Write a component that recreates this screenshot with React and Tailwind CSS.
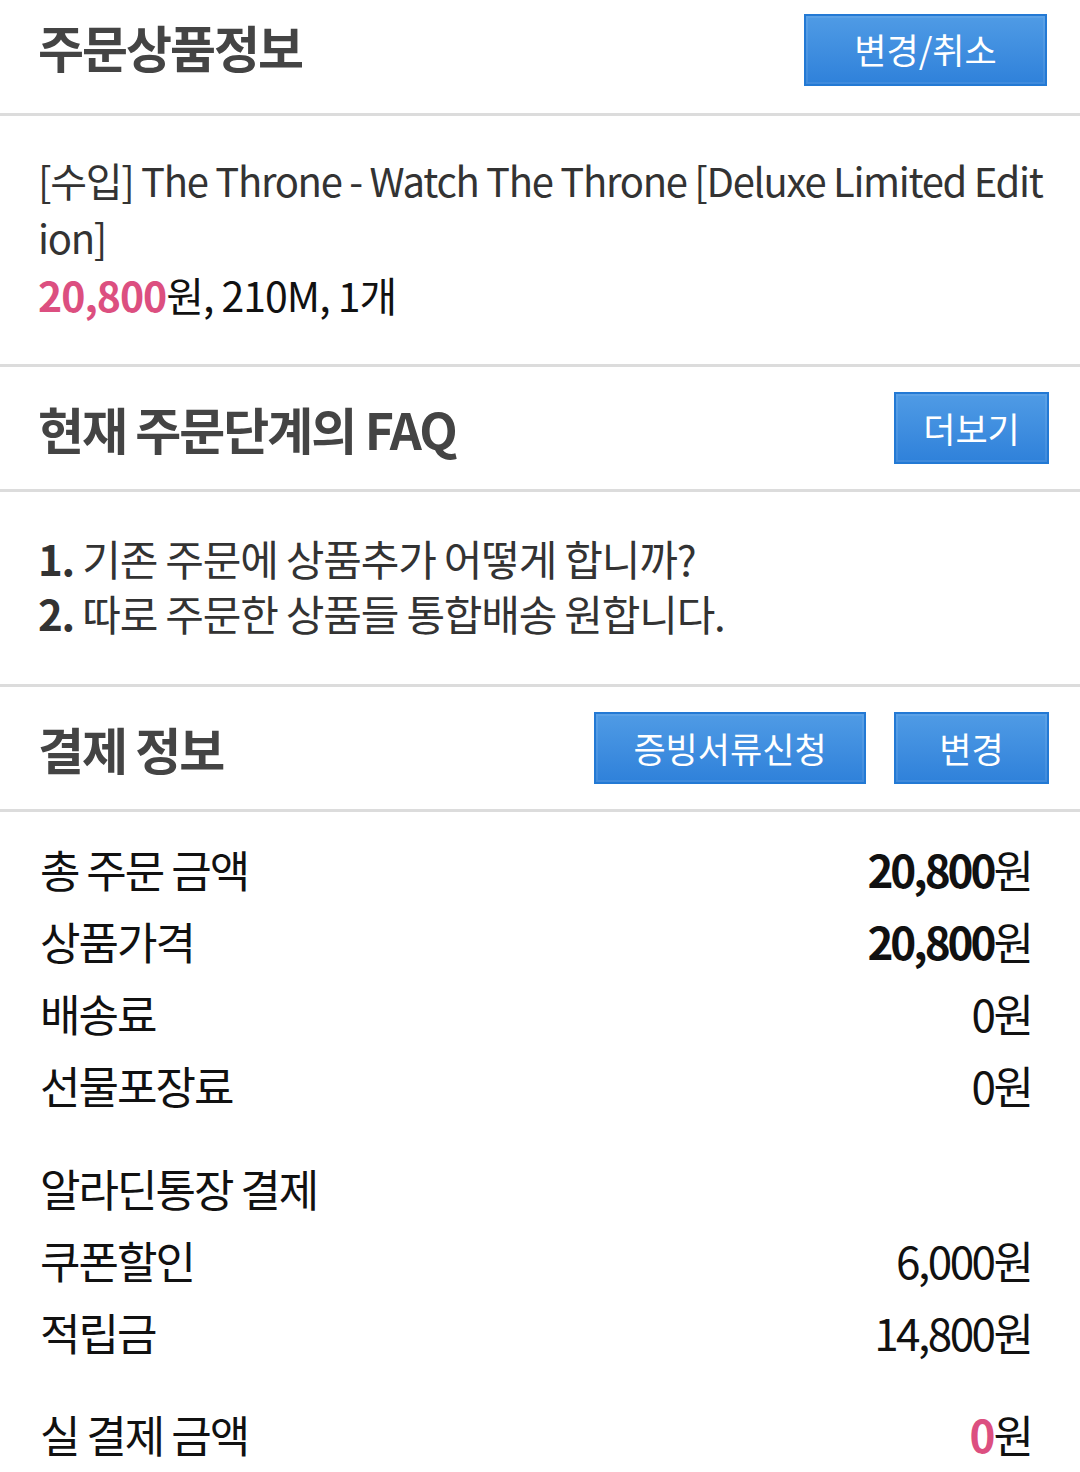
const font = { fontFamily: '"Noto Sans CJK KR", "Noto Sans", sans-serif' };

function BlueButton({ children, className = '' }) {
  return (
    <button
      className={
        'flex h-[72px] items-center justify-center border-2 border-[#2379d4] bg-gradient-to-b from-[#4f9be5] to-[#2f81da] text-[35px] text-white shadow-[inset_0_0_0_2px_rgba(255,255,255,0.08)] ' +
        className
      }
    >
      {children}
    </button>
  );
}

function Divider() {
  return <div className="h-[3px] bg-[#dcdcdc]" />;
}

function Row({ label, value, strong, pink }) {
  return (
    <div className="flex h-[72px] items-center justify-between text-[44px] tracking-[-2px] text-[#111]">
      <span>{label}</span>
      {value !== undefined && (
        <span>
          <span className={pink ? 'font-bold text-[#dc4f80]' : strong ? 'font-bold tracking-[-3px]' : 'tracking-[-2.5px]'}>{value}</span>원
        </span>
      )}
    </div>
  );
}

export default function App() {
  return (
    <div className="w-[1080px] bg-white" style={font}>
      <div className="flex h-[113px] items-center justify-between pb-[20px] pl-[38px] pr-[33px]">
        <h2 className="text-[50px] font-bold tracking-[-2px] text-[#444]">주문상품정보</h2>
        <div className="pt-[6px]">
          <BlueButton className="w-[243px]">변경/취소</BlueButton>
        </div>
      </div>
      <Divider />

      <div className="pb-[41px] pl-[38px] pr-[20px] pt-[36px] text-[40px] leading-[57px] tracking-[-1.3px] text-[#333]">
        <p>
          [수입] The Throne - Watch The Throne [Deluxe Limited Edit
          <br />
          ion]
        </p>
        <p className="text-[41px] tracking-[-1px] text-[#111]">
          <span className="font-bold text-[#dc4f80]">20,800</span>원, 210M, 1개
        </p>
      </div>
      <Divider />

      <div className="flex h-[122px] items-center justify-between pl-[38px] pr-[31px]">
        <h2 className="text-[50px] font-bold tracking-[-2px] text-[#444]">현재 주문단계의 FAQ</h2>
        <BlueButton className="w-[155px]">더보기</BlueButton>
      </div>
      <Divider />

      <div className="pb-[44px] pl-[38px] pt-[38px] text-[42px] leading-[55px] tracking-[-1.2px] text-[#333]">
        <p>
          <span className="font-bold">1.</span> 기존 주문에 상품추가 어떻게 합니까?
        </p>
        <p>
          <span className="font-bold">2.</span> 따로 주문한 상품들 통합배송 원합니다.
        </p>
      </div>
      <Divider />

      <div className="flex h-[122px] items-center justify-between pl-[38px] pr-[31px]">
        <h2 className="text-[50px] font-bold tracking-[-2px] text-[#444]">결제 정보</h2>
        <div className="flex gap-[28px]">
          <BlueButton className="w-[272px]">증빙서류신청</BlueButton>
          <BlueButton className="w-[155px]">변경</BlueButton>
        </div>
      </div>
      <Divider />

      <div className="flex flex-col pl-[40px] pr-[48px] pt-[21px]">
        <Row label="총 주문 금액" value="20,800" strong />
        <Row label="상품가격" value="20,800" strong />
        <Row label="배송료" value="0" />
        <Row label="선물포장료" value="0" />
        <div className="h-[31px]" />
        <Row label="알라딘통장 결제" />
        <Row label="쿠폰할인" value="6,000" />
        <Row label="적립금" value="14,800" />
        <div className="h-[30px]" />
        <Row label="실 결제 금액" value="0" pink />
      </div>
    </div>
  );
}
